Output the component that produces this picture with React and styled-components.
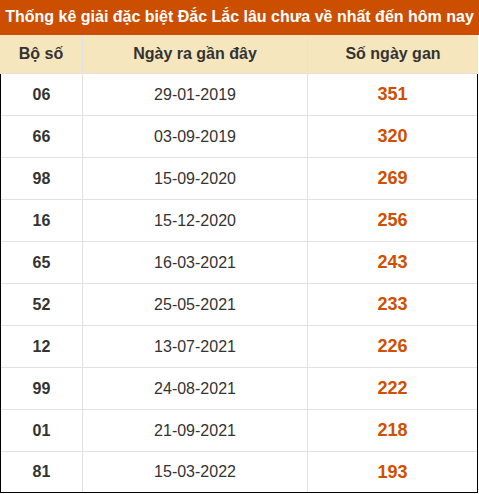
import React from 'react';
import styled, { createGlobalStyle } from 'styled-components';

const GlobalStyle = createGlobalStyle`
    html, body {
        margin: 0;
        padding: 0;
        background: #fff;
        font-family: "Liberation Sans", Arial, sans-serif;
    }
`

const rows = [
    ['06', '29-01-2019', '351'],
    ['66', '03-09-2019', '320'],
    ['98', '15-09-2020', '269'],
    ['16', '15-12-2020', '256'],
    ['65', '16-03-2021', '243'],
    ['52', '25-05-2021', '233'],
    ['12', '13-07-2021', '226'],
    ['99', '24-08-2021', '222'],
    ['01', '21-09-2021', '218'],
    ['81', '15-03-2022', '193'],
]

const Wrapper = styled.div`
    width: 479px;
    box-sizing: border-box;
`

const Title = styled.div`
    height: 35px;
    background: #cc4e00;
    color: #fff;
    font-size: 16px;
    font-weight: 700;
    display: flex;
    align-items: center;
    justify-content: center;
    white-space: nowrap;
    padding-bottom: 1px;
    box-sizing: border-box;
`

const Grid = styled.div`
    display: grid;
    grid-template-columns: 82px 225px 1fr;
    width: 478px;
`

const HeadCell = styled.div`
    height: 38px;
    background: #f5e6bd;
    color: #333;
    font-size: 16px;
    font-weight: 700;
    display: flex;
    align-items: center;
    justify-content: center;
    border-left: ${p => (p.$first ? 'none' : '1px solid #e2e2e2')};
    border-bottom: 1px solid #e2e2e2;
`

const Body = styled.div`
    display: grid;
    grid-template-columns: 81px 225px 1fr;
    width: 478px;
    box-sizing: border-box;
    border: 1px solid #000;
    border-top: none;
`

const Cell = styled.div`
    height: ${p => (p.$last ? '40px' : '41px')};
    display: flex;
    align-items: center;
    justify-content: center;
    font-size: ${p => (p.$kind === 'gan' ? '18px' : '16px')};
    font-weight: ${p => (p.$kind === 'date' ? 400 : 700)};
    color: ${p => (p.$kind === 'gan' ? '#d05000' : '#333')};
    border-left: ${p => (p.$kind === 'so' ? 'none' : '1px solid #e2e2e2')};
    border-bottom: ${p => (p.$last ? 'none' : '1px solid #e2e2e2')};
`

export default function App() {
    return (
        <Wrapper>
            <GlobalStyle />
            <Title>Thống kê giải đặc biệt Đắc Lắc lâu chưa về nhất đến hôm nay</Title>
            <Grid>
                <HeadCell $first>Bộ số</HeadCell>
                <HeadCell>Ngày ra gần đây</HeadCell>
                <HeadCell>Số ngày gan</HeadCell>
            </Grid>
            <Body>
                {rows.map(([so, date, gan], i) => (
                    <React.Fragment key={so}>
                        <Cell $kind="so" $last={i === rows.length - 1}>{so}</Cell>
                        <Cell $kind="date" $last={i === rows.length - 1}>{date}</Cell>
                        <Cell $kind="gan" $last={i === rows.length - 1}>{gan}</Cell>
                    </React.Fragment>
                ))}
            </Body>
        </Wrapper>
    )
}
